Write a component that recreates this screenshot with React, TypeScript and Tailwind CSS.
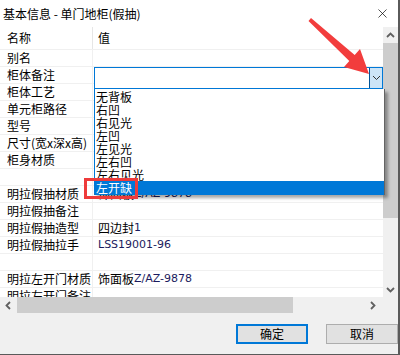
import { X } from "lucide-react";

type Row = { name: string; value?: string; latin?: string };

const rows: Row[] = [
  { name: "别名" },
  { name: "柜体备注" },
  { name: "柜体工艺" },
  { name: "单元柜路径" },
  { name: "型号" },
  { name: "尺寸(宽x深x高)" },
  { name: "柜身材质" },
  { name: "" },
  { name: "明拉假抽材质", value: "饰面板", latin: "Z/AZ-9878" },
  { name: "明拉假抽备注" },
  { name: "明拉假抽造型", value: "四边封", latin: "1" },
  { name: "明拉假抽拉手", latin: "LSS19001-96" },
  { name: "" },
  { name: "明拉左开门材质", value: "饰面板", latin: "Z/AZ-9878" },
  { name: "明拉左开门备注" },
];

const options = ["无背板", "右凹", "右见光", "左凹", "左见光", "左右凹", "左右见光", "左开缺"];

const font = { fontFamily: '"Noto Sans CJK SC", "Liberation Sans", sans-serif' };

function Chevron({ dir }: { dir: "up" | "down" | "left" | "right" }) {
  // small scrollbar arrow
  const pts = {
    up: "1,6 4.5,2.5 8,6",
    down: "1,3 4.5,6.5 8,3",
    left: "6,1 2.5,4.5 6,8",
    right: "3,1 6.5,4.5 3,8",
  }[dir];
  return (
    <svg width="9" height="9" viewBox="0 0 9 9">
      <polyline points={pts} fill="none" stroke="#606060" strokeWidth="1.8" />
    </svg>
  );
}

export default function App() {
  return (
    <div
      className="relative w-[400px] h-[355px] bg-[#f0f0f0] border-r-2 border-b border-[#5a5a5a] overflow-hidden text-[12px] text-black flex flex-col"
      style={font}
    >
      {/* title bar */}
      <div className="h-[27px] bg-white flex items-center justify-between pl-[3px] pr-[8px] shrink-0">
        <span className="leading-none">基本信息 - 单门地柜(假抽)</span>
        <X size={15} strokeWidth={1.1} />
      </div>

      <div className="flex h-[270px] shrink-0">
        {/* property grid */}
        <div className="relative w-[383px] bg-white overflow-hidden">
          <div className="flex h-[23px] border-b border-[#f0f0f0]">
            <div className="w-[93px] border-r border-[#e6e6e6] pl-[7px] flex items-center">名称</div>
            <div className="flex-1 pl-[5px] flex items-center">值</div>
          </div>
          {rows.map((r, i) => (
            <div key={i} className="flex h-[17px] border-b border-[#f0f0f0]">
              <div className="w-[93px] shrink-0 border-r border-[#f0f0f0] pl-[7px] flex items-center whitespace-nowrap overflow-hidden">
                {r.name}
              </div>
              <div className="flex-1 pl-[5px] flex items-center whitespace-nowrap">
                {r.value}
                {r.latin && (
                  <span className="text-[11px] text-[#1b1b5e]" style={{ fontFamily: '"DejaVu Sans", sans-serif' }}>
                    {r.latin}
                  </span>
                )}
              </div>
            </div>
          ))}

          {/* combo edit box on 柜体备注 */}
          <div className="absolute left-[94px] top-[40px] w-[289px] h-[22px] border border-[#0078d7] bg-white flex justify-end">
            <div className="w-[13px] h-full bg-[#cce4f7] border-l border-[#005499] flex items-center justify-center">
              <svg width="9" height="6" viewBox="0 0 9 6">
                <polyline points="1,1 4.5,4.5 8,1" fill="none" stroke="#333" strokeWidth="1" />
              </svg>
            </div>
          </div>
        </div>

        {/* vertical scrollbar */}
        <div className="w-[15px] flex flex-col bg-[#f0f0f0]">
          <div className="h-[16px] flex items-center justify-center">
            <Chevron dir="up" />
          </div>
          <div className="h-[175px] bg-[#cdcdcd]" />
          <div className="flex-1" />
          <div className="h-[16px] flex items-center justify-center">
            <Chevron dir="down" />
          </div>
        </div>
      </div>

      {/* horizontal scrollbar */}
      <div className="flex h-[16px] shrink-0">
        <div className="w-[383px] flex items-center">
          <div className="w-[17px] flex items-center justify-center">
            <Chevron dir="left" />
          </div>
          <div className="w-[276px] h-full bg-[#cdcdcd]" />
          <div className="flex-1 flex items-center justify-end pr-[6px]">
            <Chevron dir="right" />
          </div>
        </div>
      </div>

      {/* buttons */}
      <div className="flex-1 flex justify-end items-start pt-[11px] gap-[18px]">
        <button className="w-[72px] h-[20px] bg-[#e1e1e1] border-2 border-[#0078d7] flex items-center justify-center leading-none">
          确定
        </button>
        <button className="w-[72px] h-[20px] bg-[#e1e1e1] border border-[#adadad] flex items-center justify-center leading-none">
          取消
        </button>
      </div>

      {/* dropdown list overlay */}
      <div className="absolute left-[94px] top-[89px] w-[291px] h-[106px] bg-white border-l border-r border-b border-l-[#0078d7] border-r-[#646464] border-b-[#646464] shadow-[3px_3px_3px_rgba(0,0,0,0.35)] pt-px">
        {options.map((o, i) => (
          <div
            key={o}
            className={
              i === options.length - 1
                ? "h-[14px] leading-[14px] pl-px bg-[#0078d7] text-white"
                : "h-[13px] leading-[13px] pl-px overflow-visible"
            }
          >
            {o}
          </div>
        ))}
      </div>

      {/* annotation: red box + arrow */}
      <div className="absolute left-[84px] top-[178px] w-[54px] h-[21px] border-[3px] border-[#ee3b3b]" />
      <svg className="absolute left-0 top-0" width="400" height="355" viewBox="0 0 400 355">
        <polygon
          points="311,18 354.7,55 360,49 369,74 344,67 349.3,61 308.5,21"
          fill="#f23d3d"
        />
      </svg>
    </div>
  );
}
